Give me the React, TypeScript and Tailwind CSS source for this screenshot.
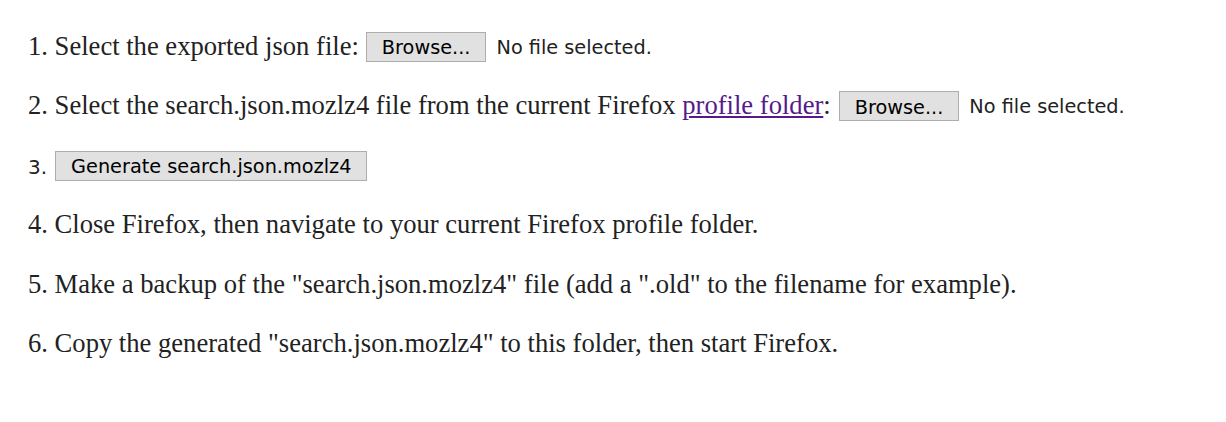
import React from 'react';

const serif = "font-['Liberation_Serif','Times_New_Roman',serif]";
const sans = "font-['DejaVu_Sans','Tahoma',sans-serif]";

const FileButton: React.FC<{ label: string; className?: string }> = ({ label, className }) => (
    <button className={`h-[30px] px-[15px] pt-[2px] bg-[#e1e1e1] border border-[#adadad] text-black text-[19.3px] leading-none ${sans} ${className ?? ''}`}>
        {label}
    </button>
);

const App: React.FC = () => {
    return (
        <div className={`w-[1226px] h-[422px] bg-white text-[#222] ${serif} text-[26.6px] pt-[32px] pl-[28px]`}>
            <div className="flex flex-col gap-[29.4px]">
                <div className="h-[30px] flex items-center whitespace-pre">
                    <span>1. Select the exported json file:</span>
                    <FileButton label="Browse..." className="ml-[7px]" />
                    <span className={`${sans} text-[19.3px] ml-[10px] mt-[2px]`}>No file selected.</span>
                </div>
                <div className="h-[30px] flex items-center whitespace-pre">
                    <span>2. Select the search.json.mozlz4 file from the current Firefox </span>
                    <a href="#" className="text-[#551a8b] underline">profile folder</a>
                    <span>:</span>
                    <FileButton label="Browse..." className="ml-[8px]" />
                    <span className={`${sans} text-[19.3px] ml-[10px] mt-[2px]`}>No file selected.</span>
                </div>
                <div className="h-[30px] flex items-center whitespace-pre">
                    <span className={`${sans} text-[20px] mt-[2px]`}>3.</span>
                    <FileButton label="Generate search.json.mozlz4" className="ml-[8px]" />
                </div>
                <div className="h-[30px] flex items-center">
                    4. Close Firefox, then navigate to your current Firefox profile folder.
                </div>
                <div className="h-[30px] flex items-center">
                    5. Make a backup of the "search.json.mozlz4" file (add a ".old" to the filename for example).
                </div>
                <div className="h-[30px] flex items-center">
                    6. Copy the generated "search.json.mozlz4" to this folder, then start Firefox.
                </div>
            </div>
        </div>
    );
};

export default App;
